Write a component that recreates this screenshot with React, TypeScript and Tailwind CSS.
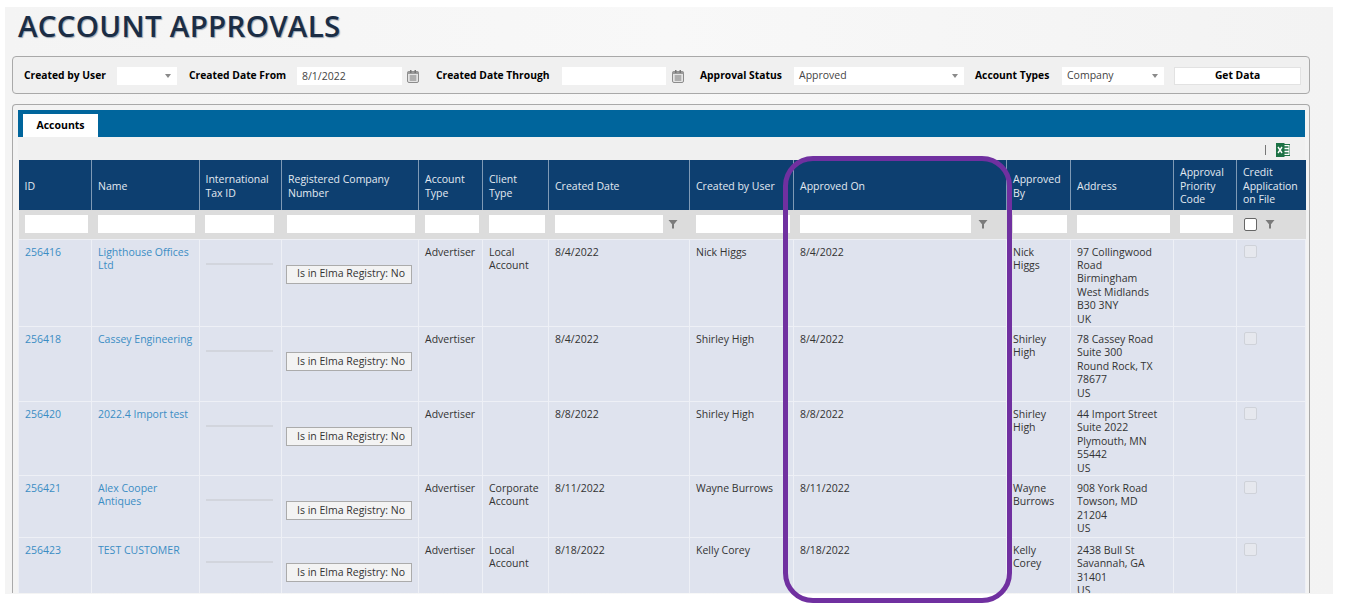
const columns = [
  { label: 'ID', width: 73 },
  { label: 'Name', width: 107.5 },
  { label: 'International Tax ID', width: 82.5 },
  { label: 'Registered Company Number', width: 137 },
  { label: 'Account Type', width: 64 },
  { label: 'Client Type', width: 66 },
  { label: 'Created Date', width: 141, funnel: 'w-[23px] pr-[2px]' },
  { label: 'Created by User', width: 104 },
  { label: 'Approved On', width: 213, funnel: 'w-[32px] pr-[8px]' },
  { label: 'Approved By', width: 64 },
  { label: 'Address', width: 103 },
  { label: 'Approval Priority Code', width: 63 },
  { label: 'Credit Application on File', width: 69 },
];

const rows = [
  {
    id: '256416',
    name: 'Lighthouse Offices Ltd',
    client: 'Local Account',
    created: '8/4/2022',
    user: 'Nick Higgs',
    approvedOn: '8/4/2022',
    address: ['97 Collingwood Road', 'Birmingham', 'West Midlands', 'B30 3NY', 'UK'],
    height: 87,
  },
  {
    id: '256418',
    name: 'Cassey Engineering',
    client: '',
    created: '8/4/2022',
    user: 'Shirley High',
    approvedOn: '8/4/2022',
    address: ['78 Cassey Road', 'Suite 300', 'Round Rock, TX', '78677', 'US'],
    height: 75,
  },
  {
    id: '256420',
    name: '2022.4 Import test',
    client: '',
    created: '8/8/2022',
    user: 'Shirley High',
    approvedOn: '8/8/2022',
    address: ['44 Import Street', 'Suite 2022', 'Plymouth, MN', '55442', 'US'],
    height: 74,
  },
  {
    id: '256421',
    name: 'Alex Cooper Antiques',
    client: 'Corporate Account',
    created: '8/11/2022',
    user: 'Wayne Burrows',
    approvedOn: '8/11/2022',
    address: ['908 York Road', 'Towson, MD', '21204', 'US'],
    height: 62,
  },
  {
    id: '256423',
    name: 'TEST CUSTOMER',
    client: 'Local Account',
    created: '8/18/2022',
    user: 'Kelly Corey',
    approvedOn: '8/18/2022',
    address: ['2438 Bull St', 'Savannah, GA', '31401', 'US'],
    height: 62,
  },
];

function Caret() {
  return <span className="w-0 h-0 border-x-[3px] border-x-transparent border-t-[4px] border-t-[#8a8a8a]" />;
}

function SelectBox({ value, className }: { value?: string; className: string }) {
  return (
    <div className={`h-[18px] bg-white flex items-center justify-between pl-[5px] pr-[6px] text-[#444] ${className}`}>
      <span>{value}</span>
      <Caret />
    </div>
  );
}

function CalendarIcon() {
  return (
    <svg width="12" height="13" viewBox="0 0 12 13" className="shrink-0">
      <rect x="0.5" y="1.5" width="11" height="11" rx="1.5" fill="#e4e4e4" stroke="#8c8c8c" />
      <rect x="0.5" y="1.5" width="11" height="2.5" fill="#9a9a9a" />
      <rect x="3" y="0" width="1.5" height="3" fill="#777" />
      <rect x="7.5" y="0" width="1.5" height="3" fill="#777" />
      <path d="M2.5 6h7M2.5 8h7M2.5 10h7M4 5v6M6 5v6M8 5v6" stroke="#909090" strokeWidth="0.8" />
    </svg>
  );
}

function FunnelIcon() {
  return (
    <svg width="10" height="10" viewBox="0 0 10 10" className="shrink-0">
      <path d="M0.5 1h9L6 5.2V9.5H4V5.2z" fill="#7b7b7b" />
    </svg>
  );
}

function ExcelIcon() {
  return (
    <svg width="14" height="14" viewBox="0 0 14 14">
      <rect x="6" y="1.5" width="8" height="11" fill="#fff" stroke="#1d7245" />
      <path d="M8 4h4.5M8 7h4.5M8 10h4.5" stroke="#1d7245" strokeWidth="1.5" />
      <rect x="0" y="0" width="8.5" height="14" fill="#1d7245" />
      <path d="M2 4l4 6M6 4l-4 6" stroke="#fff" strokeWidth="1.4" />
    </svg>
  );
}

function Cell({ children }: { children?: React.ReactNode }) {
  return <td className="border border-[#eef0f6] pl-[6px] pr-[2px] pt-[6px]">{children}</td>;
}

export default function App() {
  return (
    <div className="h-[611px] overflow-hidden bg-white font-['Open_Sans',sans-serif] text-[10.5px] leading-[13.4px] text-[#333] relative">
      <div className="ml-[5px] mt-[7px] w-[1328px] h-[587px] bg-gradient-to-r from-[#f4f4f4] via-[#f8f8f8] to-[#f3f3f3] pl-[7px] pt-[1px]">
        <h1 className="ml-[6px] h-[48px] text-[29.5px] leading-[36px] font-semibold text-[#1b2d45] tracking-[0.3px] [text-shadow:1px_1px_1px_#9aa7b5]">
          ACCOUNT APPROVALS
        </h1>

        <div className="w-[1298px] h-[38px] border border-[#a9a9a9] rounded-[4px] bg-[#f0f0f0] flex items-center pl-[11px] pt-[2px] font-bold text-black text-[10.3px]">
          <span className="w-[93px]">Created by User</span>
          <SelectBox className="w-[60px] font-normal text-[10.5px]" />
          <span className="ml-[12px] w-[108px]">Created Date From</span>
          <input readOnly value="8/1/2022" className="w-[105px] h-[18px] bg-white pl-[5px] font-normal text-[#444] text-[10.5px] outline-none" />
          <span className="ml-[5px]"><CalendarIcon /></span>
          <span className="ml-[17px] w-[126px]">Created Date Through</span>
          <input readOnly value="" className="w-[104px] h-[18px] bg-white outline-none" />
          <span className="ml-[6px]"><CalendarIcon /></span>
          <span className="ml-[16px] w-[94px]">Approval Status</span>
          <SelectBox value="Approved" className="w-[170px] font-normal text-[10.5px]" />
          <span className="ml-[11px] w-[87px]">Account Types</span>
          <SelectBox value="Company" className="w-[102px] font-normal text-[10.5px]" />
          <button className="ml-[10px] w-[127px] h-[18px] bg-white border border-[#e2e2e2] font-bold">Get Data</button>
        </div>

        <div className="mt-[10px] w-[1298px] h-[489px] overflow-hidden border border-b-0 border-[#a9a9a9] rounded-t-[4px] bg-[#f3f3f3] pl-[5px] pt-[5px]">
          <div className="w-[1287px] h-[27px] bg-[#00659c] pl-[5px] flex items-end">
            <div className="w-[75px] h-[23px] bg-white flex items-center justify-center font-bold text-black">Accounts</div>
          </div>
          <div className="w-[1287px] h-[23px] bg-[#f0f0f0] flex items-center justify-end pt-[2px] pr-[15px] gap-[10px]">
            <span className="w-px h-[10px] bg-[#777]" />
            <ExcelIcon />
          </div>

          <table className="w-[1287px] table-fixed border-collapse">
            <colgroup>
              {columns.map((col) => (
                <col key={col.label} style={{ width: col.width }} />
              ))}
            </colgroup>
            <thead>
              <tr className="h-[50px] bg-[#0d3f70]">
                {columns.map((col) => (
                  <th key={col.label} className="pl-[6px] pr-[8px] pt-[3px] border-x border-[#7f9ab5] text-left font-normal text-[#e3eaf2] first:border-l-0 last:border-r-0">
                    {col.label}
                  </th>
                ))}
              </tr>
              <tr className="h-[29px] bg-[#dcdcdc]">
                {columns.map((col, i) => (
                  <th key={col.label} className={`font-normal ${i === 2 ? 'pl-[6px] pr-[8px]' : i === 3 ? 'pl-[5px] pr-[4px]' : 'pl-[6px] pr-[4px]'}`}>
                    <div className="flex items-center">
                      {i === columns.length - 1 ? (
                        <span className="w-[13px] h-[13px] ml-px border border-[#666] rounded-[2px] bg-white" />
                      ) : (
                        <input readOnly value="" className="min-w-0 flex-1 h-[18px] bg-white outline-none" />
                      )}
                      {col.funnel && (
                        <span className={`flex justify-center ${col.funnel}`}><FunnelIcon /></span>
                      )}
                      {i === columns.length - 1 && (
                        <span className="ml-[8px]"><FunnelIcon /></span>
                      )}
                    </div>
                  </th>
                ))}
              </tr>
            </thead>
            <tbody>
              {rows.map((row) => (
                <tr key={row.id} className="bg-[#dfe3ee] align-top" style={{ height: row.height }}>
                  <Cell><a className="text-[#3b8dc4]">{row.id}</a></Cell>
                  <Cell><a className="text-[#3b8dc4]">{row.name}</a></Cell>
                  <td className="border border-[#eef0f6] pl-[6px] pr-[8px] pt-[23px]">
                    <div className="h-[2px] bg-[#d2d5dd]" />
                  </td>
                  <td className="border border-[#eef0f6] pl-[4px] pr-[5px] pt-[25px]">
                    <div className="h-[19px] w-[126px] border border-[#ababab] bg-[#f3f3f3] flex items-center pl-[10px] text-[#333]">
                      Is in Elma Registry: No
                    </div>
                  </td>
                  <Cell>Advertiser</Cell>
                  <Cell>{row.client}</Cell>
                  <Cell>{row.created}</Cell>
                  <Cell>{row.user}</Cell>
                  <Cell>{row.approvedOn}</Cell>
                  <Cell><div className="w-[45px]">{row.user}</div></Cell>
                  <Cell>{row.address.map((line) => <div key={line}>{line}</div>)}</Cell>
                  <Cell />
                  <td className="border border-[#eef0f6] pl-[7px] pt-[5px]">
                    <div className="w-[13px] h-[13px] rounded-[2px] border border-[#cfd2d9] bg-[#e6e8ee]" />
                  </td>
                </tr>
              ))}
            </tbody>
          </table>
        </div>
      </div>

      {/* purple annotation drawn over the Approved On column */}
      <div className="absolute left-[783px] top-[156px] w-[229px] h-[447px] border-[5px] border-[#7030a0] rounded-[30px]" />
    </div>
  );
}
